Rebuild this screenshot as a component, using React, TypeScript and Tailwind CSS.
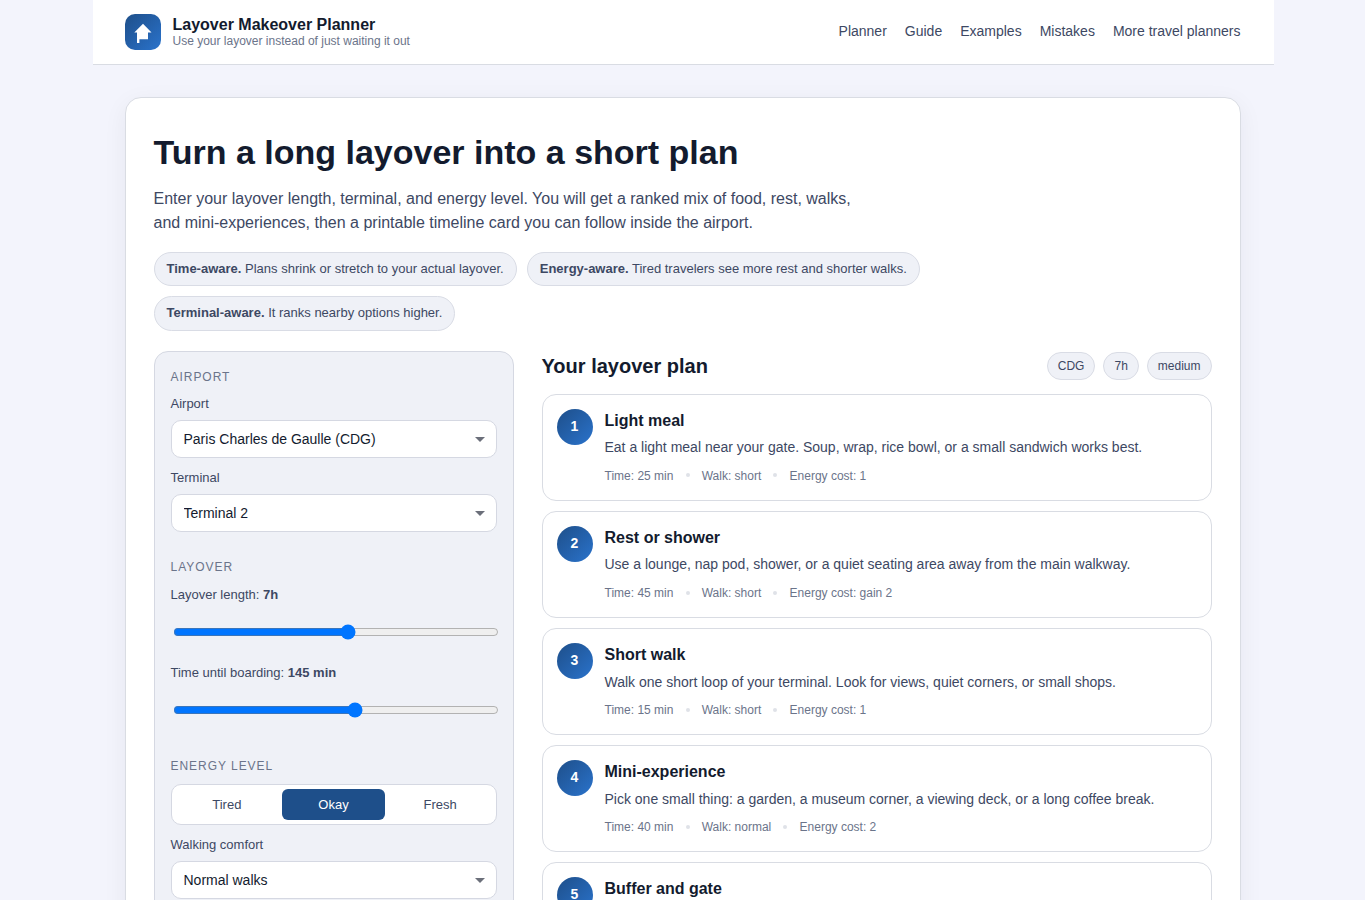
import { useState } from "react";
import type { ReactNode } from "react";

const NAV = ["Planner", "Guide", "Examples", "Mistakes", "More travel planners"];

const FEATURES = [
  { name: "Time-aware.", text: "Plans shrink or stretch to your actual layover." },
  { name: "Energy-aware.", text: "Tired travelers see more rest and shorter walks." },
  { name: "Terminal-aware.", text: "It ranks nearby options higher." },
];

const STEPS = [
  {
    title: "Light meal",
    text: "Eat a light meal near your gate. Soup, wrap, rice bowl, or a small sandwich works best.",
    meta: ["Time: 25 min", "Walk: short", "Energy cost: 1"],
  },
  {
    title: "Rest or shower",
    text: "Use a lounge, nap pod, shower, or a quiet seating area away from the main walkway.",
    meta: ["Time: 45 min", "Walk: short", "Energy cost: gain 2"],
  },
  {
    title: "Short walk",
    text: "Walk one short loop of your terminal. Look for views, quiet corners, or small shops.",
    meta: ["Time: 15 min", "Walk: short", "Energy cost: 1"],
  },
  {
    title: "Mini-experience",
    text: "Pick one small thing: a garden, a museum corner, a viewing deck, or a long coffee break.",
    meta: ["Time: 40 min", "Walk: normal", "Energy cost: 2"],
  },
  {
    title: "Buffer and gate",
    text: "",
    meta: [],
  },
];

const ENERGY = ["Tired", "Okay", "Fresh"];

const Logo = () => (
  <div className="h-9 w-9 rounded-[10px] bg-linear-135 from-[#1e4f8a] to-[#2a73cc]">
    <svg viewBox="0 0 36 36" className="h-9 w-9" fill="#fff">
      <path d="M18 9.8L26.5 18.6H23V25.2H14.4V29H12V18.6H9.3Z" />
    </svg>
  </div>
);

const GroupTitle = ({ children }: { children: ReactNode }) => (
  <h3 className="text-xs leading-[18px] tracking-[0.96px] text-[#6b748a] uppercase">{children}</h3>
);

const Select = ({ label, options }: { label: string; options: string[] }) => (
  <label className="block text-[13px] leading-5 text-[#3d4863]">
    {label}
    <span className="relative mt-[6px] block">
      <select className="block h-[38px] w-full appearance-none rounded-[10px] border border-[#d5d8e2] bg-white px-3 text-sm text-[#131b2e]">
        {options.map((o) => <option key={o}>{o}</option>)}
      </select>
      <svg viewBox="0 0 10 5" className="pointer-events-none absolute top-[17px] right-3 h-[5px] w-[10px]" fill="#6b6f7a">
        <path d="M0 0h10L5 5z" />
      </svg>
    </span>
  </label>
);

interface SliderProps {
  label: string;
  min: number;
  max: number;
  initial: number;
  format: (v: number) => string;
}

const Slider = ({ label, min, max, initial, format }: SliderProps) => {
  const [value, setValue] = useState(initial);
  return (
    <label className="block text-[13px] leading-5 text-[#3d4863]">
      {label} <strong>{format(value)}</strong>
      <input type="range" min={min} max={max} value={value}
        onChange={(e) => setValue(Number(e.target.value))}
        className="mx-0.5 mt-[19px] mb-[23px] block h-4 w-full" />
    </label>
  );
};

const Tag = ({ children }: { children: ReactNode }) => (
  <span className="rounded-full border border-[#d9dce5] bg-[#eff1f7] px-[10px] py-1 text-xs leading-[18px] text-[#3d4863]">
    {children}
  </span>
);

export default function App() {
  const [energy, setEnergy] = useState("Okay");

  return (
    <div className="h-screen overflow-hidden bg-[#f3f4fc] font-['Liberation_Sans',Arial,sans-serif] text-[#131b2e]">
      <div className="mx-auto w-[1180px]">
        <header className="-mr-px flex h-[65px] items-center justify-between border-b border-[#d9dce3] bg-white pr-[33px] pl-8">
          <div className="flex items-center gap-3">
            <Logo />
            <div>
              <div className="text-base leading-[18px] font-bold">Layover Makeover Planner</div>
              <div className="text-xs leading-[15px] text-[#6b748a]">Use your layover instead of just waiting it out</div>
            </div>
          </div>
          <nav className="flex gap-[18px] pb-0.5 text-sm text-[#3d4863]">
            {NAV.map((item) => <a key={item} href="#">{item}</a>)}
          </nav>
        </header>

        <main className="mx-8 mt-8 h-[1100px] rounded-2xl border border-[#d9dce3] bg-white p-7 shadow-[0_6px_24px_rgba(19,27,46,0.06)]">
          <h1 className="mt-px text-[34px] leading-[51px] font-bold">Turn a long layover into a short plan</h1>
          <p className="mt-[9px] max-w-[720px] text-base leading-6 text-[#3d4863]">
            Enter your layover length, terminal, and energy level. You will get a ranked mix of food, rest, walks, and
            mini-experiences, then a printable timeline card you can follow inside the airport.
          </p>

          <ul className="mt-[17px] flex flex-wrap gap-[10px]">
            {FEATURES.map((f) => (
              <li key={f.name} className="h-[34.4px] rounded-full border border-[#d9dce5] bg-[#eff1f7] px-3 text-[13px] leading-[32px] text-[#3d4863]">
                <strong>{f.name}</strong> {f.text}
              </li>
            ))}
          </ul>

          <div className="mt-[20.4px] flex items-start gap-7">
            {/* Trip settings */}
            <form className="h-[760px] w-[360px] shrink-0 rounded-[14px] border border-[#d5d8e2] bg-[#eff1f7] p-4">
              <GroupTitle>Airport</GroupTitle>
              <div className="mt-2 space-y-[10px]">
                <Select label="Airport" options={["Paris Charles de Gaulle (CDG)"]} />
                <Select label="Terminal" options={["Terminal 2"]} />
              </div>

              <div className="mt-[26px]">
                <GroupTitle>Layover</GroupTitle>
                <div className="mt-[9px]">
                  <Slider label="Layover length:" min={0} max={12.94} initial={7} format={(v) => `${v}h`} />
                  <Slider label="Time until boarding:" min={0} max={257} initial={145} format={(v) => `${v} min`} />
                </div>
              </div>

              <div className="mt-[39px]">
                <GroupTitle>Energy level</GroupTitle>
                <div className="mt-[9px] mb-[10px] grid grid-cols-3 gap-1 rounded-[10px] border border-[#d5d8e2] bg-white p-1">
                  {ENERGY.map((level) => (
                    <button key={level} type="button" onClick={() => setEnergy(level)}
                      className={`h-[31px] rounded-md text-[13px] ${
                        energy === level ? "bg-[#1e4f8a] text-white" : "text-[#3d4863]"
                      }`}>
                      {level}
                    </button>
                  ))}
                </div>
                <Select label="Walking comfort" options={["Normal walks"]} />
              </div>
            </form>

            {/* Ranked plan */}
            <section className="flex-1">
              <div className="flex items-center justify-between">
                <h2 className="text-xl leading-[30px] font-bold">Your layover plan</h2>
                <div className="flex gap-2">
                  <Tag>CDG</Tag>
                  <Tag>7h</Tag>
                  <Tag>medium</Tag>
                </div>
              </div>
              <ol className="mt-[13px] space-y-[10px]">
                {STEPS.map((step, i) => (
                  <li key={step.title} className="flex h-[107.07px] gap-3 rounded-[14px] border border-[#d9dce3] bg-white p-[14px]">
                    <span className="flex h-9 w-9 shrink-0 justify-center rounded-full bg-linear-135 from-[#1e4f8a] to-[#2a73cc] text-sm leading-[34px] font-bold text-white">
                      {i + 1}
                    </span>
                    <div>
                      <h3 className="text-base leading-6 font-bold">{step.title}</h3>
                      <p className="mt-[4.22px] text-sm leading-[21px] text-[#3d4863]">{step.text}</p>
                      <div className="mt-[8.57px] flex items-center gap-[12.2px] text-xs leading-[18px] text-[#6b748a]">
                        {step.meta.map((m, n) => (
                          <span key={m} className="flex items-center gap-[12.1px]">
                            {n > 0 && <i className="mb-px h-1 w-1 rounded-full bg-[#dfe2e8]" />}
                            {m}
                          </span>
                        ))}
                      </div>
                    </div>
                  </li>
                ))}
              </ol>
            </section>
          </div>
        </main>
      </div>
    </div>
  );
}
